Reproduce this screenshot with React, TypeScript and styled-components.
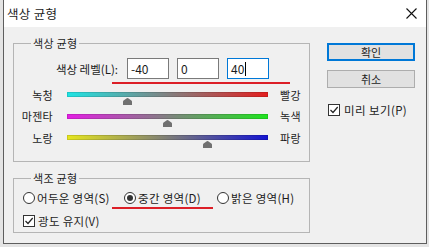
import styled, { createGlobalStyle } from "styled-components"

const GlobalStyle = createGlobalStyle`
	html, body {
		margin: 0;
		padding: 0;
		background: #e4e4e4;
	}
	body {
		font-family: "Noto Sans CJK KR", "Noto Sans", sans-serif;
		font-size: 11px;
		color: #1c1c1c;
	}
`

interface Slider {
	left: string
	right: string
	from: string
	to: string
	value: number
}

const sliders: Slider[] = [
	{ left: "녹청", right: "빨강", from: "#1ee4e4", to: "#e41e1e", value: -40 },
	{ left: "마젠타", right: "녹색", from: "#e41ee4", to: "#1ee41e", value: 0 },
	{ left: "노랑", right: "파랑", from: "#e6e61e", to: "#1414d2", value: 40 },
]

const TRACK_W = 201

export default function App() {
	return (
		<Page>
			<GlobalStyle />
			<Dialog>
				<TitleBar>
					<span>색상 균형</span>
					<svg width="11" height="11" viewBox="0 0 11 11">
						<path d="M0.5 0.5 L10.5 10.5 M10.5 0.5 L0.5 10.5" stroke="#111" strokeWidth="1.1" />
					</svg>
				</TitleBar>
				<Body>
					<LeftCol>
						<Group $pb={12.5}>
							<Legend>색상 균형</Legend>
							<LevelsRow>
								<LevelLabel>색상 레벨(L):</LevelLabel>
								<NumField>-40</NumField>
								<NumField>0</NumField>
								<NumField $focus>
									40
									<Caret />
								</NumField>
							</LevelsRow>
							<Mark $left={98} $width={178} $mt={3} />
							{sliders.map(s => (
								<SliderRow key={s.left}>
									<SideLabel>{s.left}</SideLabel>
									<Track $from={s.from} $to={s.to}>
										<Thumb style={{ left: ((s.value + 100) / 200) * TRACK_W - 4.5 }}>
											<svg width="9" height="7" viewBox="0 0 9 7">
												<path d="M0 7 L0 3.6 Q0 3 0.6 2.5 L3.8 0.3 Q4.5 -0.1 5.2 0.3 L8.4 2.5 Q9 3 9 3.6 L9 7 Z" fill="#707070" />
											</svg>
										</Thumb>
									</Track>
									<EndLabel>{s.right}</EndLabel>
								</SliderRow>
							))}
						</Group>
						<Group $mt={9} $pb={3}>
							<Legend>색조 균형</Legend>
							<RadioRow>
								<Option $w={101}>
									<Radio />
									어두운 영역(S)
								</Option>
								<Option $w={93}>
									<Radio $checked />
									중간 영역(D)
								</Option>
								<Option>
									<Radio />
									밝은 영역(H)
								</Option>
							</RadioRow>
							<Mark $left={98} $width={101} $mt={1} />
							<CheckRow>
								<CheckBox />
								광도 유지(V)
							</CheckRow>
						</Group>
					</LeftCol>
					<RightCol>
						<Button $primary>확인</Button>
						<Button>취소</Button>
						<PreviewRow>
							<CheckBox />
							미리 보기(P)
						</PreviewRow>
					</RightCol>
				</Body>
			</Dialog>
		</Page>
	)
}

function CheckBox() {
	return (
		<Box>
			<svg width="10" height="10" viewBox="0 0 10 10">
				<path d="M1.5 5 L4 7.5 L8.7 2" stroke="#222" strokeWidth="1.2" fill="none" />
			</svg>
		</Box>
	)
}

const Page = styled.div`
	width: 429px;
	height: 247px;
	overflow: hidden;
`
const Dialog = styled.div`
	margin-left: 3px;
	width: 424px;
	height: 244px;
	box-sizing: border-box;
	border: 1px solid #5e5e5e;
	border-top: none;
	background: #f0f0f0;
	display: flex;
	flex-direction: column;
`
const TitleBar = styled.div`
	height: 27px;
	flex-shrink: 0;
	background: #fff;
	display: flex;
	align-items: center;
	justify-content: space-between;
	padding: 0 9px 0 3px;
	font-size: 12.5px;
	letter-spacing: 0.3px;
`
const Body = styled.div`
	display: flex;
	gap: 17px;
	padding: 9px 0 0 9px;
`
const LeftCol = styled.div`
	width: 297px;
	display: flex;
	flex-direction: column;
`
const Group = styled.fieldset<{ $mt?: number; $pb: number }>`
	margin: ${({ $mt }) => $mt ?? 0}px 0 0;
	padding: 0 0 ${({ $pb }) => $pb}px;
	width: 297px;
	min-width: 0;
	box-sizing: border-box;
	border: 1px solid #b5b5b5;
`
const Legend = styled.legend`
	margin-left: 17px;
	padding: 0 2px;
	line-height: 14px;
	font-size: 11px;
	letter-spacing: 0.3px;
`
const LevelsRow = styled.div`
	display: flex;
	align-items: center;
	height: 21px;
	margin-top: 8px;
`
const LevelLabel = styled.span`
	width: 104px;
	margin-right: 9px;
	text-align: right;
	font-size: 11.5px;
`
const NumField = styled.div<{ $focus?: boolean }>`
	width: 42px;
	height: 21px;
	box-sizing: border-box;
	border: 1px solid ${({ $focus }) => ($focus ? "#0078d7" : "#7a7a7a")};
	background: #fff;
	padding-left: 3px;
	display: flex;
	align-items: center;
	font-size: 12px;
	& + & {
		margin-left: 8px;
	}
`
const Caret = styled.span`
	display: inline-block;
	width: 1px;
	height: 14px;
	margin-left: 1px;
	background: #000;
`
const Mark = styled.div<{ $left: number; $width: number; $mt: number }>`
	height: 2px;
	margin-top: ${({ $mt }) => $mt}px;
	margin-left: ${({ $left }) => $left}px;
	width: ${({ $width }) => $width}px;
	background: #dc1f27;
`
const SliderRow = styled.div`
	display: flex;
	align-items: center;
	height: 21.5px;
	letter-spacing: 0.3px;
`
const SideLabel = styled.span`
	width: 39px;
	text-align: right;
`
const EndLabel = styled.span`
	margin-left: 12px;
	white-space: nowrap;
`
const Track = styled.div<{ $from: string; $to: string }>`
	position: relative;
	width: ${TRACK_W}px;
	height: 5px;
	margin-left: 14px;
	background: linear-gradient(to right, ${({ $from }) => $from}, ${({ $to }) => $to});
	box-shadow: inset 0 0 0 1px rgba(0, 0, 0, 0.12);
`
const Thumb = styled.div`
	position: absolute;
	top: calc(100% + 1px);
	width: 9px;
	height: 7px;
	display: flex;
`
const RadioRow = styled.div`
	display: flex;
	align-items: center;
	height: 16px;
	margin-top: 5px;
	padding-left: 9px;
`
const Option = styled.label<{ $w?: number }>`
	display: flex;
	align-items: center;
	gap: 2px;
	width: ${({ $w }) => ($w ? `${$w}px` : "auto")};
	white-space: nowrap;
	font-size: 11.5px;
	letter-spacing: 0.3px;
`
const Radio = styled.span<{ $checked?: boolean }>`
	width: 12px;
	height: 12px;
	box-sizing: border-box;
	border: 1px solid #333;
	border-radius: 50%;
	background: #fff;
	display: flex;
	align-items: center;
	justify-content: center;
	&::after {
		content: "";
		display: ${({ $checked }) => ($checked ? "block" : "none")};
		width: 6px;
		height: 6px;
		border-radius: 50%;
		background: #333;
	}
`
const CheckRow = styled.label`
	display: flex;
	align-items: center;
	gap: 3px;
	height: 16px;
	margin-top: 4px;
	padding-left: 9px;
	font-size: 11.5px;
	letter-spacing: 0.3px;
`
const Box = styled.span`
	width: 12px;
	height: 12px;
	box-sizing: border-box;
	border: 1px solid #333;
	background: #fff;
	display: flex;
	align-items: center;
	justify-content: center;
`
const RightCol = styled.div`
	width: 88px;
	display: flex;
	flex-direction: column;
	padding-top: 7px;
`
const Button = styled.div<{ $primary?: boolean }>`
	height: 18px;
	box-sizing: border-box;
	border: ${({ $primary }) => ($primary ? "2px solid #0078d7" : "1px solid #adadad")};
	background: #e1e1e1;
	display: flex;
	align-items: center;
	justify-content: center;
	font-size: 11px;
	& + & {
		margin-top: 9px;
	}
`
const PreviewRow = styled.label`
	display: flex;
	align-items: center;
	gap: 4px;
	height: 14px;
	margin-top: 15px;
	padding-left: 1px;
	font-size: 11.5px;
	letter-spacing: 0.4px;
	white-space: nowrap;
`
